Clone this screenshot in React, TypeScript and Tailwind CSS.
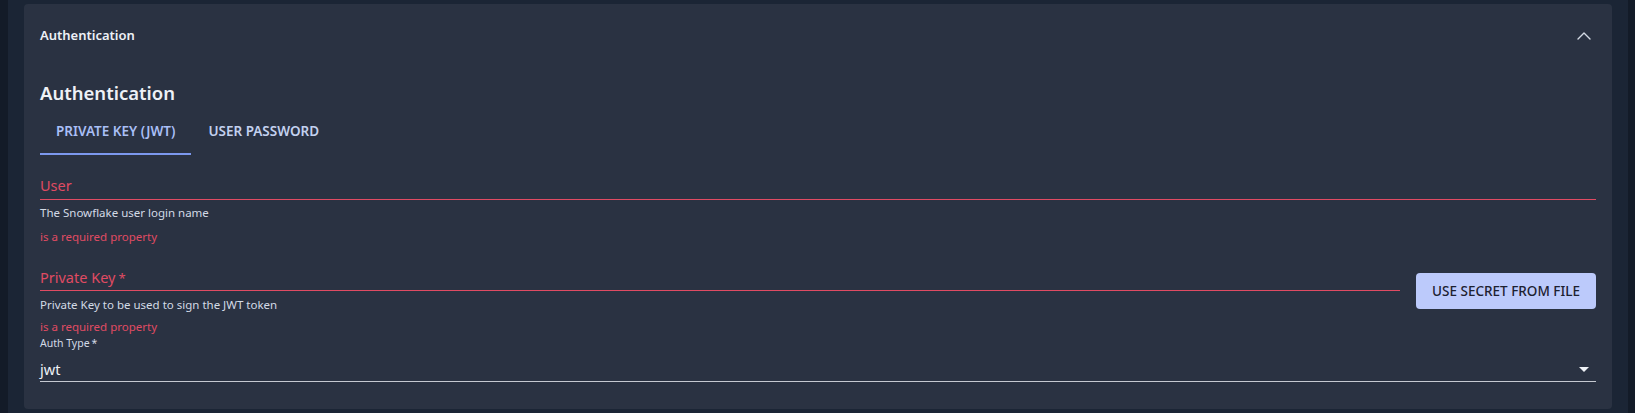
import { ChevronUp } from "lucide-react";

const font = { fontFamily: '"Noto Sans", "Open Sans", sans-serif' };

export default function App() {
  return (
    <div className="flex h-[413px] w-full bg-[#131b28] pl-2 pr-[7px]" style={font}>
      <div className="flex-1 bg-[#1b2535] px-4 pt-1 pb-1">
        <div className="h-full rounded-[4px] bg-[#2a3242]">
          <div className="flex h-16 items-center justify-between pl-4 pr-4">
            <span className="text-[13px] font-semibold text-[#eef1f6]">Authentication</span>
            <ChevronUp className="h-6 w-6 text-[#d4dae4]" strokeWidth={1.4} />
          </div>

          <div className="px-4 pt-[11px] pb-[26px]">
            <h2 className="text-[18.5px] font-semibold leading-7 text-[#eef1f6]">Authentication</h2>

            <div className="flex h-12">
              <button className="relative px-4 text-[13.5px] font-semibold text-[#a9bff6]">
                PRIVATE KEY (JWT)
                <span className="absolute bottom-0 left-0 right-0 h-[2px] bg-[#7c98ee]" />
              </button>
              <button className="pl-[17px] pr-4 text-[13.5px] font-semibold text-[#c3d1ef]">
                USER PASSWORD
              </button>
            </div>

            <div className="mt-[18px] border-b border-[#e04b63] pb-[2px]">
              <span className="text-[14.5px] leading-6 text-[#e04b63]">User</span>
            </div>
            <p className="mt-[5px] text-[11.5px] leading-4 text-[#d3dae6]">The Snowflake user login name</p>
            <p className="mt-2 text-[11.5px] leading-4 text-[#e04b63]">is a required property</p>

            <div className="mt-5 flex gap-4">
              <div className="flex-1">
                <div className="border-b border-[#e04b63]">
                  <span className="text-[14.5px] leading-6 text-[#e04b63]">
                    Private Key<span className="ml-[3px] text-[13px]">*</span>
                  </span>
                </div>
                <p className="mt-[6px] text-[11.5px] leading-4 text-[#d3dae6]">
                  Private Key to be used to sign the JWT token
                </p>
                <p className="mt-[6px] text-[11.5px] leading-4 text-[#e04b63]">is a required property</p>
              </div>
              <button className="mt-2 h-9 w-[180px] rounded-[4px] bg-[#bccafb] text-[13.5px] font-medium text-[#1c2130]">
                USE SECRET FROM FILE
              </button>
            </div>

            <p className="text-[10.5px] leading-4 text-[#d3dae6]">
              Auth Type<span className="ml-[2px]">*</span>
            </p>
            <div className="mt-[6px] flex h-[25px] items-center justify-between border-b border-[#c5c9d1]">
              <span className="text-[14.5px] leading-6 text-[#eef1f6]">jwt</span>
              <svg className="mr-[7px] h-[5px] w-[10px]" viewBox="0 0 10 5">
                <path d="M0 0 L10 0 L5 5 Z" fill="#eef1f6" />
              </svg>
            </div>
          </div>
        </div>
      </div>
    </div>
  );
}
